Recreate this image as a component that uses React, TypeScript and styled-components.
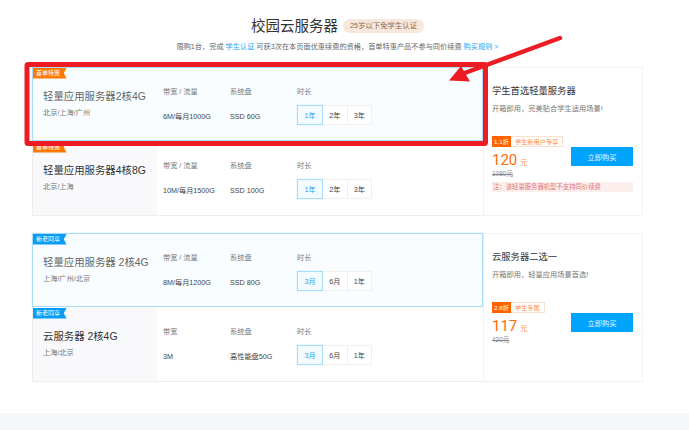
import React from "react";
import styled, { createGlobalStyle } from "styled-components";

const Global = createGlobalStyle`
  html, body { margin: 0; padding: 0; background: #fff; }
  body { font-family: "Liberation Sans", "Noto Sans CJK SC", sans-serif; color: #333; }
  * { box-sizing: border-box; }
`;

const Page = styled.div`
  position: relative;
  width: 689px;
  height: 430px;
  overflow: hidden;
  display: flex;
  flex-direction: column;
`;
const Header = styled.header`
  width: 611px;
  margin-left: 32px;
  height: 67px;
  padding-top: 17px;
  display: flex;
  flex-direction: column;
  align-items: center;
`;
const TitleLine = styled.div`
  display: flex;
  align-items: center;
  gap: 5px;
  height: 18px;
`;
const PageTitle = styled.h1`
  margin: 0;
  font-size: 14.5px;
  line-height: 18px;
  font-weight: 400;
  color: #333;
`;
const Badge = styled.span`
  height: 14px;
  padding: 0 7px;
  border-radius: 7px;
  background: #f6e8dd;
  color: #8b6c58;
  font-size: 7.36px;
  line-height: 14px;
`;
const Sub = styled.p`
  margin: 6px 0 0;
  font-size: 7.2px;
  line-height: 12px;
  color: #666;
`;
const Link = styled.span`
  color: #1aa5f5;
`;
const Main = styled.main`
  flex: 1;
  padding-left: 32px;
  display: flex;
  flex-direction: column;
  gap: 17px;
`;
const Group = styled.section`
  width: 611px;
  height: 149px;
  display: flex;
`;
const Rows = styled.div`
  width: 451px;
  display: flex;
  flex-direction: column;
  border-bottom: 1px solid #eee;
`;
const Row = styled.div<{ $active?: boolean }>`
  position: relative;
  height: 74.5px;
  display: flex;
  background: ${(p) => (p.$active ? "#f9fdff" : "#fff")};
  border: 1px solid ${(p) => (p.$active ? "#a9dcf9" : "transparent")};
  border-left-color: ${(p) => (p.$active ? "#a9dcf9" : "#eee")};
  border-bottom-width: ${(p) => (p.$active ? "1px" : "0")};
  box-shadow: ${(p) => (p.$active ? "0 0 1px #a9dcf9" : "none")};
`;
const Tag = styled.span<{ $blue?: boolean }>`
  position: absolute;
  left: 0;
  top: 0;
  width: 33.5px;
  height: 10.5px;
  padding-left: 3px;
  font-size: 6px;
  line-height: 10.5px;
  color: #fff;
  background: ${(p) => (p.$blue ? "#0a9cf5" : "#ff7a00")};
  clip-path: polygon(0 0, 100% 0, 92% 50%, 100% 100%, 0 100%);
`;
const Info = styled.div<{ $active?: boolean }>`
  width: 124px;
  padding: 22px 0 0 10px;
  background: ${(p) => (p.$active ? "transparent" : "#f9f9fb")};
`;
const Name = styled.div<{ $dark?: boolean }>`
  font-size: 10.4px;
  line-height: 14px;
  color: ${(p) => (p.$dark ? "#333" : "#666")};
`;
const Region = styled.div`
  margin-top: 4px;
  font-size: 7.2px;
  line-height: 10px;
  color: #777;
`;
const Col = styled.div<{ $w: number }>`
  width: ${(p) => p.$w}px;
  padding-top: 19px;
  display: flex;
  flex-direction: column;
`;
const Spec = styled.div`
  display: flex;
  padding-left: 6px;
`;
const Label = styled.div`
  font-size: 7.2px;
  line-height: 10px;
  color: #777;
`;
const Value = styled.div`
  margin-top: 15px;
  font-size: 7.2px;
  line-height: 10px;
  color: #444;
`;
const Options = styled.div`
  margin-top: 8px;
  display: flex;
`;
const Option = styled.button<{ $on?: boolean }>`
  width: ${(p) => (p.$on ? "26px" : "24.5px")};
  height: 20px;
  padding: 0;
  font: inherit;
  font-size: 7.2px;
  color: ${(p) => (p.$on ? "#1aa5f5" : "#444")};
  background: ${(p) => (p.$on ? "#f4fbff" : "#fff")};
  border: 1px solid ${(p) => (p.$on ? "#a9dcf9" : "#f0f0f0")};
  border-left-width: ${(p) => (p.$on ? "1px" : "0")};
  box-shadow: ${(p) => (p.$on ? "0 0 1px #a9dcf9" : "none")};
`;
const Side = styled.aside`
  width: 160px;
  padding: 17px 9px 0 8px;
  border: 1px solid #f2f2f2;
  display: flex;
  flex-direction: column;
`;
const SideTitle = styled.h2`
  margin: 0;
  font-size: 9.3px;
  line-height: 13px;
  font-weight: 400;
  color: #333;
`;
const SideDesc = styled.p`
  margin: 5px 0 0;
  font-size: 7.25px;
  line-height: 11px;
  color: #777;
`;
const Deal = styled.div`
  margin-top: 22px;
  display: flex;
  justify-content: space-between;
`;
const PriceBox = styled.div`
  display: flex;
  flex-direction: column;
`;
const Discount = styled.div`
  align-self: flex-start;
  height: 11px;
  display: flex;
  border: 1px solid #fde0c8;
  border-left: 0;
  font-size: 6.2px;
  line-height: 9px;
`;
const Off = styled.span`
  width: 19px;
  margin: -1px 0;
  line-height: 11px;
  text-align: center;
  background: #ff6300;
  color: #fff;
`;
const DiscountText = styled.span`
  padding: 0 4px 0 4px;
  color: #ff8a3c;
`;
const Price = styled.div`
  margin-top: 6px;
  height: 14px;
  display: flex;
  align-items: baseline;
  gap: 3px;
  font-family: Roboto, "Liberation Sans", sans-serif;
  font-weight: 400;
  font-size: 15px;
  line-height: 14px;
  color: #ff6a0a;
`;
const Unit = styled.span`
  font-family: "Liberation Sans", "Noto Sans CJK SC", sans-serif;
  font-size: 7px;
  color: #ff8a3c;
`;
const OldPrice = styled.del`
  margin-top: 1.5px;
  font-size: 6.5px;
  line-height: 9px;
  color: #888;
`;
const Buy = styled.button`
  width: 62px;
  height: 19px;
  margin-top: 11px;
  padding: 0;
  border: 0;
  background: #00a4ff;
  color: #e6f6ff;
  font: inherit;
  font-size: 7.2px;
`;
const Note = styled.div`
  margin-top: 4.5px;
  height: 10px;
  padding-left: 1px;
  background: #fdeeee;
  color: #e0787c;
  font-size: 6.35px;
  line-height: 10px;
`;
const Footer = styled.footer`
  height: 17px;
  background: #f5f7fa;
`;
const Mark = styled.svg`
  position: absolute;
  left: 0;
  top: 0;
  pointer-events: none;
`;

type RowData = {
  tag: string;
  blue?: boolean;
  active?: boolean;
  name: string;
  region: string;
  label: string;
  value: string;
  disk: string;
  opts: string[];
};

const ProductRow = ({ r }: { r: RowData }) => (
  <Row $active={r.active}>
    <Tag $blue={r.blue}>{r.tag}</Tag>
    <Info $active={r.active}>
      <Name $dark={!r.active}>{r.name}</Name>
      <Region>{r.region}</Region>
    </Info>
    <Spec>
      <Col $w={67}>
        <Label>{r.label}</Label>
        <Value>{r.value}</Value>
      </Col>
      <Col $w={67}>
        <Label>系统盘</Label>
        <Value>{r.disk}</Value>
      </Col>
      <Col $w={80}>
        <Label>时长</Label>
        <Options>
          {r.opts.map((o, i) => (
            <Option key={o} $on={i === 0}>{o}</Option>
          ))}
        </Options>
      </Col>
    </Spec>
  </Row>
);

const groupA: RowData[] = [
  { tag: "首单特惠", active: true, name: "轻量应用服务器2核4G", region: "北京/上海/广州", label: "带宽 / 流量", value: "6M/每月1000G", disk: "SSD 60G", opts: ["1年", "2年", "3年"] },
  { tag: "首单特惠", name: "轻量应用服务器4核8G", region: "北京/上海", label: "带宽 / 流量", value: "10M/每月1500G", disk: "SSD 100G", opts: ["1年", "2年", "3年"] },
];
const groupB: RowData[] = [
  { tag: "新老同享", blue: true, active: true, name: "轻量应用服务器 2核4G", region: "上海/广州/北京", label: "带宽 / 流量", value: "8M/每月1200G", disk: "SSD 80G", opts: ["3月", "6月", "1年"] },
  { tag: "新老同享", blue: true, name: "云服务器 2核4G", region: "上海/北京", label: "带宽", value: "3M", disk: "高性能盘50G", opts: ["3月", "6月", "1年"] },
];

export default function App() {
  return (
    <Page>
      <Global />
      <Header>
        <TitleLine>
          <PageTitle>校园云服务器</PageTitle>
          <Badge>25岁以下免学生认证</Badge>
        </TitleLine>
        <Sub>
          限购1台，完成 <Link>学生认证</Link> 可获3次在本页面优惠续费的资格，首单特惠产品不参与同价续费 <Link>购买规则 &gt;</Link>
        </Sub>
      </Header>
      <Main>
        <Group>
          <Rows>{groupA.map((r) => <ProductRow key={r.name} r={r} />)}</Rows>
          <Side>
            <SideTitle>学生首选轻量服务器</SideTitle>
            <SideDesc>开箱即用，完美贴合学生适用场景!</SideDesc>
            <Deal>
              <PriceBox>
                <Discount><Off>1.1折</Off><DiscountText>学生新用户专享</DiscountText></Discount>
                <Price>120<Unit>元</Unit></Price>
                <OldPrice>1080元</OldPrice>
              </PriceBox>
              <Buy>立即购买</Buy>
            </Deal>
            <Note>注：该轻量服务器机型不支持同价续费</Note>
          </Side>
        </Group>
        <Group>
          <Rows>{groupB.map((r) => <ProductRow key={r.name} r={r} />)}</Rows>
          <Side>
            <SideTitle>云服务器二选一</SideTitle>
            <SideDesc>开箱即用，轻量应用场景首选!</SideDesc>
            <Deal>
              <PriceBox>
                <Discount><Off>2.8折</Off><DiscountText>学生专属</DiscountText></Discount>
                <Price>117<Unit>元</Unit></Price>
                <OldPrice>420元</OldPrice>
              </PriceBox>
              <Buy>立即购买</Buy>
            </Deal>
          </Side>
        </Group>
      </Main>
      <Footer />
      <Mark width="689" height="430" viewBox="0 0 689 430">
        <rect x="27" y="64.5" width="458.5" height="79" rx="1" fill="none" stroke="#ed1c24" strokeWidth="5" />
        <line x1="560" y1="38" x2="462" y2="74" stroke="#ed1c24" strokeWidth="4.5" strokeLinecap="round" />
        <polygon points="449,80.5 470,81.5 461,66" fill="#ed1c24" />
      </Mark>
    </Page>
  );
}
